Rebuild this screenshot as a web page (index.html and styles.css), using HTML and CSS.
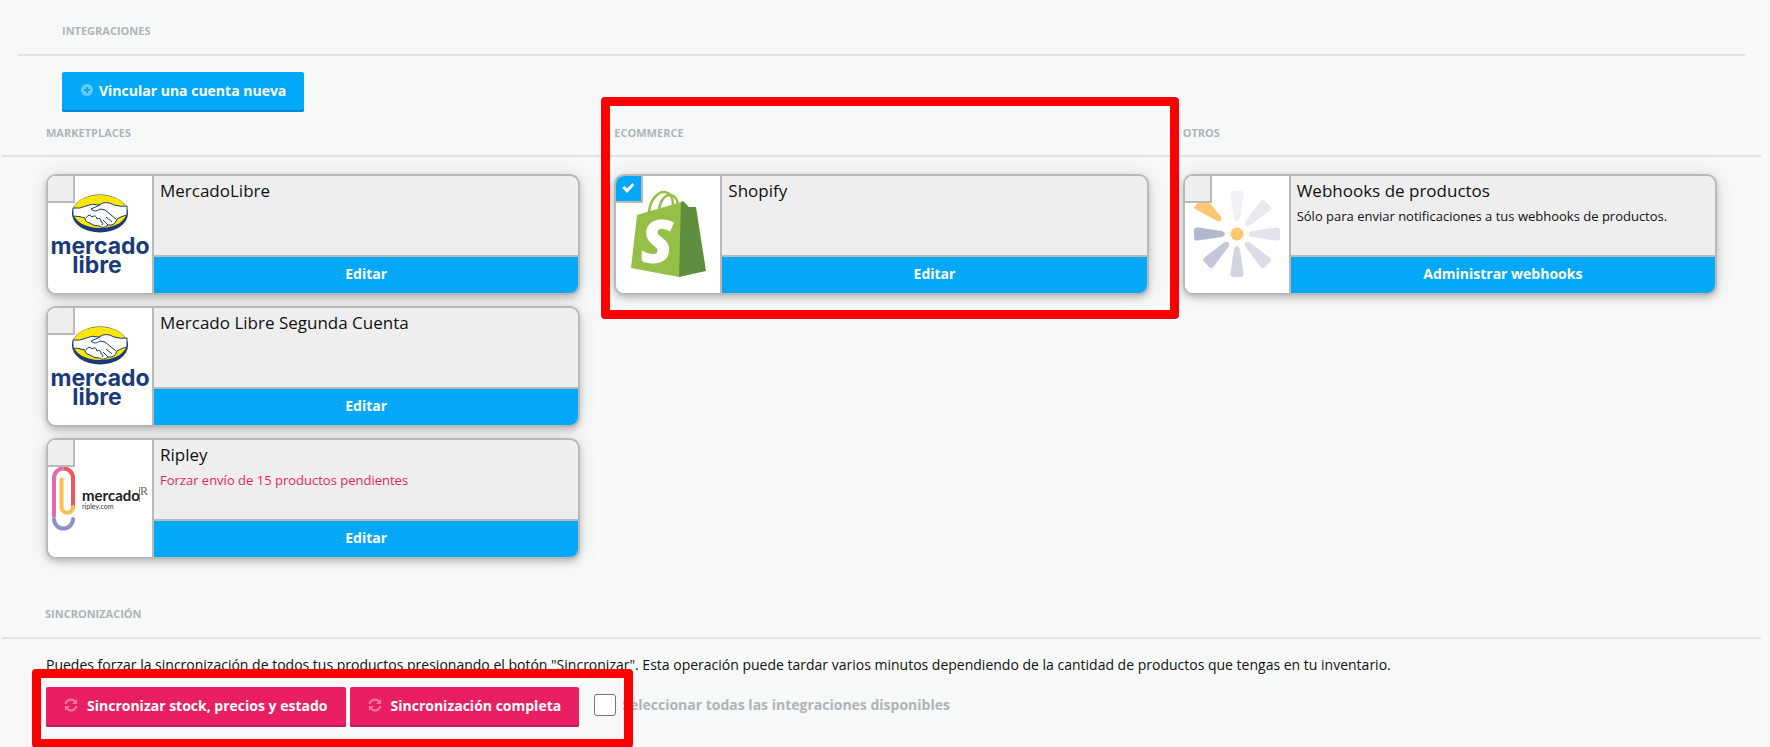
FILE: index.html
```html
<!DOCTYPE html>
<html lang="es">
<head>
  <meta charset="UTF-8">
  <title>Integraciones</title>
  <meta name="viewport" content="width=device-width, initial-scale=1">
  <link rel="stylesheet" href="styles.css">
</head>
<body>
  <svg class="sprite" aria-hidden="true">
    <symbol id="logo-mercadolibre" viewBox="0 0 104 117">
      <ellipse cx="52" cy="37.500" rx="28" ry="19" fill="#1a3a78"/>
      <ellipse cx="52" cy="35.500" rx="27" ry="16.500" fill="#ffe600"/>
      <path d="M25 32 Q32 33 38 30 Q44 27 51 29 Q58 24 66 29 Q73 31 79 30 L79 39 Q74 40 69 43 Q67 50 60 49 Q56 53 51 50 Q45 50 42 47 Q37 46 37 42 Q31 40 25 40 Z" fill="#fff" stroke="#1a3a78" stroke-width="1"/>
      <path d="M52 29 L43 33 Q47 37 52 33 L57 34 L68 43 M38 42 Q41 37 44 41 Q48 38 49 43 Q53 41 53 46 Q56 46 54 49 M58 41 L64 46 M55 44 L60 49" fill="none" stroke="#1a3a78" stroke-width="1"/>
      <text class="meli-word" x="52" y="78">mercado</text>
      <text class="meli-word" x="49" y="97">libre</text>
    </symbol>
    <symbol id="logo-shopify" viewBox="0 0 104 117">
      <g fill="none" stroke="#95bf47" stroke-width="2.500">
        <path d="M33 36 C34 24 42 15 49 16 C55 17 57 22 57 29"/>
        <path d="M43 34 C44 25 49 18 55 19 C59 20 61 23 62 28"/>
      </g>
      <path d="M21 39 L65 26 L66 100 L63 101 L15 92 Z" fill="#95bf47"/>
      <path d="M65 26 L67 25 L73 31 L80 31 L90 95 L63 101 Z" fill="#5e8e3e"/>
      <text class="shopify-letter" x="41" y="87">S</text>
    </symbol>
    <symbol id="logo-webhooks" viewBox="-52 -58 104 117">
      <defs>
        <path id="petal" d="M-4 -43 H4 Q7 -43 6.500 -39 L3 -15 Q2 -12 0 -12 Q-2 -12 -3 -15 L-6.500 -39 Q-7 -43 -4 -43 Z"/>
      </defs>
      <use href="#petal" fill="#f0f1f5"/>
      <use href="#petal" fill="#e9eaf0" transform="rotate(45)"/>
      <use href="#petal" fill="#e2e3eb" transform="rotate(90)"/>
      <use href="#petal" fill="#dadce6" transform="rotate(135)"/>
      <use href="#petal" fill="#d2d4e2" transform="rotate(180)"/>
      <use href="#petal" fill="#c4c7d9" transform="rotate(225)"/>
      <use href="#petal" fill="#b4b8ce" transform="rotate(270)"/>
      <path d="M-8 -50 H8 L3 -24 Q2 -21 0 -21 Q-2 -21 -3 -24 Z" fill="#ffc670" transform="rotate(310)"/>
      <circle r="6.500" fill="#ffc670"/>
    </symbol>
    <symbol id="logo-ripley" viewBox="0 0 104 117">
      <g fill="none" stroke-width="4" stroke-linecap="round">
        <path d="M6 79 A9.500 9.500 0 0 0 25 79" stroke="#8b90cc"/>
        <path d="M6 77 V38 A9.500 9.500 0 0 1 15.500 28.500" stroke="#e06bae" stroke-linecap="butt"/>
        <path d="M15.500 28.500 A9.500 9.500 0 0 1 25 38 V67" stroke="#f0565c" stroke-linecap="butt"/>
        <path d="M13.500 39.500 V67 A5.700 5.700 0 0 0 25 67" stroke="#ffbe4d"/>
      </g>
      <text class="ripley-word" x="34" y="61">mercado</text>
      <path d="M91.500 47 V62" stroke="#888" stroke-width="1"/>
      <text class="ripley-r" x="92" y="55">R</text>
      <text class="ripley-site" x="34" y="69">ripley.com</text>
    </symbol>
    <symbol id="icon-sync" viewBox="0 0 14 14">
      <path d="M1.500 6 A5.500 5.500 0 0 1 11 3.500 M12.500 8 A5.500 5.500 0 0 1 3 10.500" fill="none" stroke="currentColor" stroke-width="2"/>
      <path d="M13 1 V6 H8 Z M1 13 V8 H6 Z" fill="currentColor"/>
    </symbol>
    <symbol id="icon-plus" viewBox="0 0 14 14">
      <path fill="currentColor" fill-rule="evenodd" d="M7 1 A6 6 0 1 0 7 13 A6 6 0 1 0 7 1 Z M6 4 H8 V6 H10 V8 H8 V10 H6 V8 H4 V6 H6 Z"/>
    </symbol>
  </svg>

  <header class="page-header">
    <h1 class="section-title">Integraciones</h1>
  </header>
  <div class="toolbar">
    <button type="button" class="btn btn-blue"><svg class="btn-icon"><use href="#icon-plus"/></svg>Vincular una cuenta nueva</button>
  </div>

  <main>
    <div class="columns">
      <section class="column">
        <h2 class="section-title">Marketplaces</h2>
        <div class="cards">
          <article class="card">
            <input type="checkbox" class="card-check" aria-label="Seleccionar MercadoLibre">
            <svg class="card-logo"><use href="#logo-mercadolibre"/></svg>
            <div class="card-body">
              <h3>MercadoLibre</h3>
              <button type="button" class="card-action">Editar</button>
            </div>
          </article>
          <article class="card">
            <input type="checkbox" class="card-check" aria-label="Seleccionar Mercado Libre Segunda Cuenta">
            <svg class="card-logo"><use href="#logo-mercadolibre"/></svg>
            <div class="card-body">
              <h3>Mercado Libre Segunda Cuenta</h3>
              <button type="button" class="card-action">Editar</button>
            </div>
          </article>
          <article class="card">
            <input type="checkbox" class="card-check" aria-label="Seleccionar Ripley">
            <svg class="card-logo"><use href="#logo-ripley"/></svg>
            <div class="card-body">
              <h3>Ripley</h3>
              <a href="#" class="card-note pending">Forzar envío de 15 productos pendientes</a>
              <button type="button" class="card-action">Editar</button>
            </div>
          </article>
        </div>
      </section>

      <section class="column">
        <div class="highlight highlight-column">
          <h2 class="section-title">Ecommerce</h2>
          <div class="cards">
            <article class="card">
              <input type="checkbox" class="card-check" aria-label="Seleccionar Shopify" checked>
              <svg class="card-logo"><use href="#logo-shopify"/></svg>
              <div class="card-body">
                <h3>Shopify</h3>
                <button type="button" class="card-action">Editar</button>
              </div>
            </article>
          </div>
        </div>
      </section>

      <section class="column">
        <h2 class="section-title">Otros</h2>
        <div class="cards">
          <article class="card">
            <input type="checkbox" class="card-check" aria-label="Seleccionar Webhooks de productos">
            <svg class="card-logo"><use href="#logo-webhooks"/></svg>
            <div class="card-body">
              <h3>Webhooks de productos</h3>
              <p class="card-note">Sólo para enviar notificaciones a tus webhooks de productos.</p>
              <button type="button" class="card-action">Administrar webhooks</button>
            </div>
          </article>
        </div>
      </section>
    </div>

    <section class="sync">
      <h2 class="section-title">Sincronización</h2>
      <p class="sync-text">Puedes forzar la sincronización de todos tus productos presionando el botón "Sincronizar". Esta operación puede tardar varios minutos dependiendo de la cantidad de productos que tengas en tu inventario.</p>
      <div class="sync-actions">
        <div class="highlight highlight-buttons">
          <button type="button" class="btn btn-pink"><svg class="btn-icon"><use href="#icon-sync"/></svg>Sincronizar stock, precios y estado</button>
          <button type="button" class="btn btn-pink"><svg class="btn-icon"><use href="#icon-sync"/></svg>Sincronización completa</button>
          <input type="checkbox" id="select-all" class="select-all">
        </div>
        <label for="select-all">Seleccionar todas las integraciones disponibles</label>
      </div>
    </section>
  </main>
</body>
</html>
```
FILE: styles.css
```css
* {
  box-sizing: border-box;
}

body {
  margin: 0;
  background: #f7f9f8;
  color: #111;
  font-family: "Open Sans", sans-serif;
  font-size: 14px;
  line-height: 20px;
}

h1, h2, h3, p {
  margin: 0;
}

button {
  font-family: inherit;
  cursor: pointer;
}

.sprite {
  display: none;
}

.section-title {
  color: #aeb4b7;
  font-size: 11px;
  font-weight: 700;
  line-height: 16px;
  text-transform: uppercase;
}

/* top */
.page-header {
  margin: 0 25px 0 18px;
  padding: 23px 44px 15px;
  border-bottom: 2px solid #e1e4e3;
}

.toolbar {
  padding: 16px 62px 13px;
}

.btn {
  display: inline-flex;
  align-items: center;
  height: 40px;
  padding: 0 18px 4px;
  border: none;
  border-radius: 2px;
  color: #fff;
  font-size: 14px;
  font-weight: 700;
}

.btn-icon {
  width: 14px;
  height: 14px;
  opacity: 0.4;
}

.btn-blue {
  gap: 5px;
  background: #03a9f8;
  box-shadow: inset 0 -2px #0288d1;
}

.btn-pink {
  gap: 9px;
  background: #e91e63;
  box-shadow: inset 0 -2px #c2185b;
}

/* columns */
.columns {
  display: grid;
  grid-template-columns: repeat(3, 1fr);
  column-gap: 34px;
  margin: 0 9px 0 2px;
  padding: 0 44px;
  background: linear-gradient(#e1e4e3, #e1e4e3) 0 30px / 100% 2px no-repeat;
}

.cards {
  display: flex;
  flex-direction: column;
  gap: 11px;
  padding-top: 33px;
}

.card {
  position: relative;
  display: flex;
  height: 121px;
  border: 2px solid #b9b9b9;
  border-radius: 10px;
  background: #eee;
  overflow: hidden;
  box-shadow: 0 3px 6px rgba(0, 0, 0, 0.2), 0 0 20px rgba(0, 0, 0, 0.1);
}

.card-check {
  position: absolute;
  top: 0;
  left: 0;
  width: 27px;
  height: 27px;
  margin: 0;
  appearance: none;
  background: #eee;
  border: solid #b9b9b9;
  border-width: 0 2px 2px 0;
}

.card-check:checked {
  background: #03a9f8;
}

.card-check:checked::before {
  content: "";
  display: block;
  width: 12px;
  height: 10px;
  margin: 7px 6px;
  background: #fff;
  clip-path: polygon(0 50%, 17% 30%, 40% 55%, 84% 0, 100% 20%, 40% 100%);
}

.card-logo {
  flex: none;
  width: 106px;
  height: 117px;
  background: #fff;
  border-right: 2px solid #b9b9b9;
}

.card-body {
  flex: 1;
  display: flex;
  flex-direction: column;
  min-width: 0;
}

.card-body h3 {
  padding: 3px 6px 0;
  font-size: 17px;
  font-weight: 400;
  line-height: 24px;
}

.card-note {
  padding: 3px 6px 0;
  font-size: 13px;
  line-height: 20px;
}

.pending {
  color: #e91e63;
  text-decoration: none;
}

.card-action {
  height: 38px;
  margin-top: auto;
  padding: 0 0 4px;
  border: none;
  border-top: 2px solid #b9b9b9;
  background: #03a9f8;
  color: #fff;
  font-size: 14px;
  font-weight: 700;
}

/* red frames over the page */
.highlight {
  position: relative;
}

.highlight::after {
  content: "";
  position: absolute;
  border: 9px solid #f00;
  border-radius: 4px;
  pointer-events: none;
}

.highlight-column::after {
  inset: -28px -30px -24px -13px;
}

.highlight-buttons::after {
  inset: -18px -17px -21px -14px;
}

/* sync */
.sync {
  margin: 47px 9px 0 2px;
  padding-bottom: 21px;
}

.sync .section-title {
  padding: 0 43px 15px;
  border-bottom: 2px solid #e1e4e3;
}

.sync-text {
  padding: 16px 44px 0;
}

.sync-actions {
  display: flex;
  align-items: center;
  gap: 6px;
  padding: 12px 44px 0;
}

.highlight-buttons {
  display: flex;
  align-items: center;
  gap: 4px;
}

.select-all {
  width: 22px;
  height: 22px;
  margin: 0 0 4px 11px;
  appearance: none;
  background: #fff;
  border: 1px solid #767676;
  border-radius: 3px;
}

.sync-actions label {
  padding-bottom: 4px;
  color: #aeb4b7;
  font-weight: 700;
}

/* words inside the logos */
.meli-word {
  fill: #1a3a78;
  font-family: Inter, sans-serif;
  font-size: 23px;
  font-weight: 700;
  text-anchor: middle;
}

.shopify-letter {
  fill: #fff;
  font-size: 60px;
  font-style: italic;
  font-weight: 800;
  text-anchor: middle;
}

.ripley-word {
  fill: #222;
  font-family: Lato, sans-serif;
  font-size: 15px;
  font-weight: 700;
}

.ripley-site {
  fill: #333;
  font-family: Lato, sans-serif;
  font-size: 7px;
}

.ripley-r {
  fill: #666;
  font-family: "Liberation Serif", serif;
  font-size: 12px;
}
```
